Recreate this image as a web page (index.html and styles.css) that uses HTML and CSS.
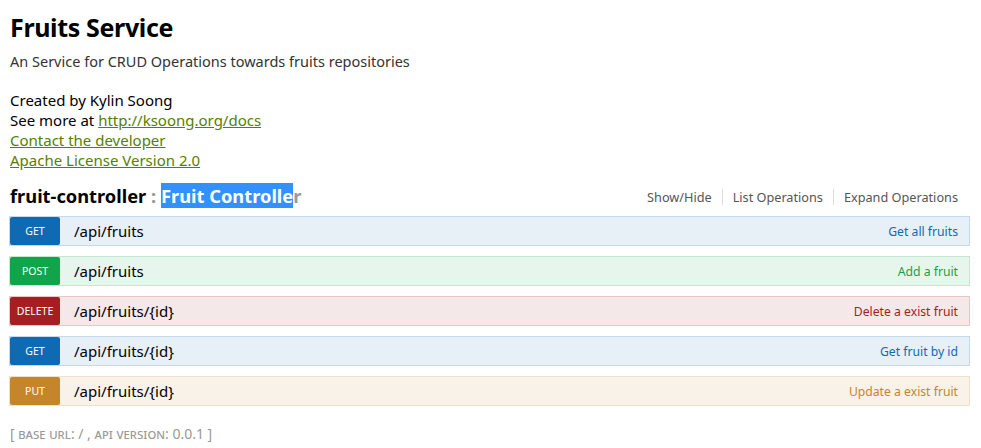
FILE: index.html
```html
<!DOCTYPE html>
<html>
<head>
<meta charset="utf-8">
<link rel="stylesheet" href="styles.css">
</head>
<body>
<div class="wrap">
  <div class="info">
    <div class="info-title">Fruits Service</div>
    <div class="info-desc">An Service for CRUD Operations towards fruits repositories</div>
    <div class="info-meta">
      <div>Created by Kylin Soong</div>
      <div>See more at <a href="#">http://ksoong.org/docs</a></div>
      <div><a href="#">Contact the developer</a></div>
      <div><a href="#">Apache License Version 2.0</a></div>
    </div>
  </div>
  <div class="resource">
    <div class="heading">
      <h2><span class="name">fruit-controller</span> : <span class="sel">Fruit Controlle</span>r</h2>
      <ul class="options">
        <li>Show/Hide</li>
        <li>List Operations</li>
        <li>Expand Operations</li>
      </ul>
    </div>
    <ul class="ops">
      <li class="op get"><span class="method">GET</span><span class="path">/api/fruits</span><span class="summary">Get all fruits</span></li>
      <li class="op post"><span class="method">POST</span><span class="path">/api/fruits</span><span class="summary">Add a fruit</span></li>
      <li class="op delete"><span class="method">DELETE</span><span class="path">/api/fruits/{id}</span><span class="summary">Delete a exist fruit</span></li>
      <li class="op get"><span class="method">GET</span><span class="path">/api/fruits/{id}</span><span class="summary">Get fruit by id</span></li>
      <li class="op put"><span class="method">PUT</span><span class="path">/api/fruits/{id}</span><span class="summary">Update a exist fruit</span></li>
    </ul>
  </div>
  <div class="footer">[ <span class="sc">base url</span>: / , <span class="sc">api version</span>: 0.0.1 ]</div>
</div>
</body>
</html>
```

FILE: styles.css
```css
* { box-sizing: border-box; }
body {
  margin: 0;
  font-family: "Noto Sans", "Open Sans", sans-serif;
  color: #000;
  background: #fff;
}
.wrap {
  width: 961px;
  margin-left: 9px;
  padding-top: 10px;
}
.info { padding-left: 1px; }
.info-title {
  font-size: 25px;
  letter-spacing: -0.35px;
  font-weight: bold;
  line-height: 34px;
  padding-bottom: 7px;
}
.info-desc {
  font-size: 14.5px;
  color: #333;
  line-height: 20px;
  padding-bottom: 19px;
}
.info-meta {
  font-size: 15px;
  line-height: 20px;
}
.info-meta a { color: #547f00; }
.resource { margin-top: 10px; }
.heading {
  display: flex;
  justify-content: space-between;
  align-items: center;
  height: 30px;
  padding-left: 1px;
}
.heading h2 {
  margin: 0;
  font-size: 18.3px;
  font-weight: bold;
  color: #999;
  line-height: 23px;
}
.heading h2 .name { color: #000; }
.heading h2 .sel { background: #3390ff; color: #fff; }
.options {
  list-style: none;
  margin: 0;
  padding: 0 12px 0 0;
  display: flex;
  font-size: 12.7px;
  color: #555;
  line-height: 16px;
  margin-top: 4px;
}
.options li {
  padding: 0 10px 0 10px;
  border-left: 1px solid #ddd;
}
.options li:first-child { border-left: none; }
.options li:last-child { padding-right: 0; }
.ops {
  list-style: none;
  margin: 0;
  padding: 0;
  margin-top: 6px;
}
.op {
  display: flex;
  align-items: center;
  height: 30px;
  border: 1px solid;
  margin-bottom: 10px;
}
.method {
  width: 50px;
  height: 28px;
  border-radius: 2px;
  color: #fff;
  font-size: 10.5px;
  display: flex;
  align-items: center;
  justify-content: center;
  flex: none;
}
.path {
  font-size: 15px;
  margin-left: 14px;
  flex: 1;
}
.summary {
  font-size: 12.2px;
  padding-right: 11px;
}
.get { background: #e7f0f7; border-color: #c3d9ec; }
.get .method { background: #0f6ab4; }
.get .summary { color: #0f6ab4; }
.post { background: #e7f6ec; border-color: #c3e8d1; }
.post .method { background: #10a54a; }
.post .summary { color: #10a54a; }
.delete { background: #f5e8e8; border-color: #e8c6c7; }
.delete .method { background: #a41e22; }
.delete .summary { color: #a41e22; }
.put { background: #f9f2e9; border-color: #f0e0ca; }
.put .method { background: #c5862b; }
.put .summary { color: #c5862b; }
.footer {
  font-size: 14px;
  line-height: 20px;
  color: #999;
  padding-left: 1px;
  margin-top: 18px;
}
.footer .sc { font-variant: small-caps; }
```
